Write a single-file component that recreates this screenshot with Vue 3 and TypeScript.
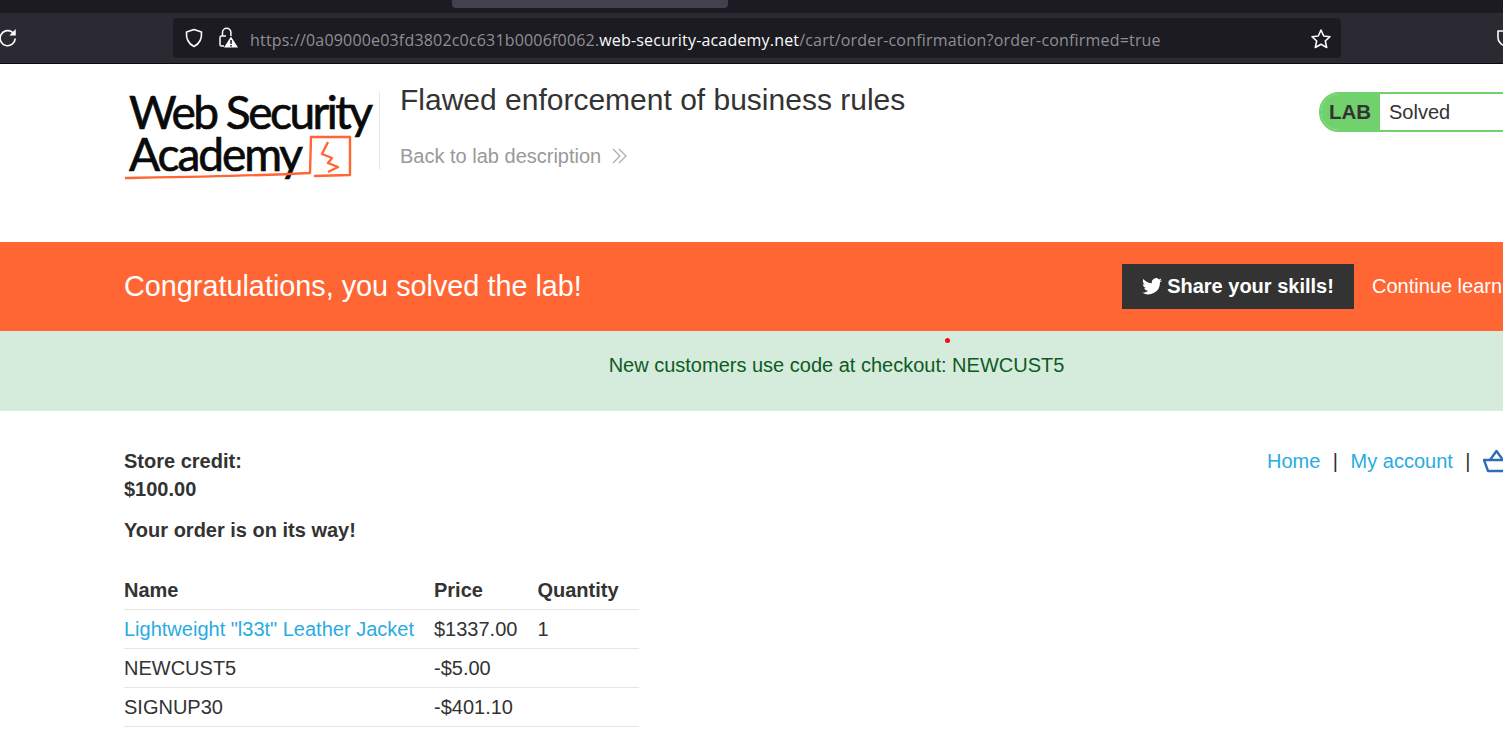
<script setup lang="ts">
interface Row { name: string; price: string; qty: string; link?: boolean }
const rows: Row[] = [
  { name: 'Lightweight "l33t" Leather Jacket', price: '$1337.00', qty: '1', link: true },
  { name: 'NEWCUST5', price: '-$5.00', qty: '' },
  { name: 'SIGNUP30', price: '-$401.10', qty: '' },
]
</script>

<template>
  <div class="viewport">
    <div class="tabstrip"><div class="tab"></div></div>
    <div class="toolbar">
      <svg class="reload" width="20" height="20" viewBox="0 0 18 18" fill="none" stroke="#fbfbfe" stroke-width="1.5">
        <path d="M15.500 9.500A6.800 6.800 0 1 1 12.500 3.500L15 6" />
        <path d="M16 1V6.800H10.200" fill="#fbfbfe" stroke="none" />
      </svg>
      <div class="urlbar">
        <svg class="shield" width="20" height="20" viewBox="0 0 20 20" fill="none" stroke="#fbfbfe" stroke-width="1.6">
          <path d="M10 1.500 17.500 4C18 10.500 15.500 15.800 10 18.500 4.500 15.800 2 10.500 2.500 4Z" stroke-linejoin="round" />
        </svg>
        <svg class="lock" width="20" height="22" viewBox="0 0 20 22" fill="none">
          <path d="M4.500 9V5.500a4.200 4.200 0 0 1 8.400 0V9" stroke="#fbfbfe" stroke-width="1.500" />
          <path d="M8 9H3.500A1.500 1.500 0 0 0 2 10.500v7A1.500 1.500 0 0 0 3.500 19H6" stroke="#fbfbfe" stroke-width="1.500" />
          <path d="M13 9.500 20 20.500H6Z" fill="#fbfbfe" />
          <rect x="12.300" y="13" width="1.500" height="4" fill="#1c1b22" />
          <rect x="12.300" y="18" width="1.500" height="1.500" fill="#1c1b22" />
        </svg>
        <div class="url"><span class="dim">https://0a09000e03fd3802c0c631b0006f0062.</span><span class="host">web-security-academy.net</span><span class="dim">/cart/order-confirmation?order-confirmed=true</span></div>
        <svg class="star" width="22" height="22" viewBox="0 0 22 22" fill="none" stroke="#fbfbfe" stroke-width="1.600" stroke-linejoin="round">
          <path d="M11 2 13.700 8 20 8.700 15.300 13 16.700 19.500 11 16.200 5.300 19.500 6.700 13 2 8.700 8.300 8Z" />
        </svg>
      </div>
      <svg class="pocket" width="18" height="20" viewBox="0 0 18 20" fill="none" stroke="#fbfbfe" stroke-width="1.600">
        <path d="M2 3H16V10C16 14 12 17 9 18 6 17 2 14 2 10Z" stroke-linejoin="round" />
      </svg>
    </div>

    <div class="page">
      <header class="lab-header">
        <div class="logo">
          <div class="logo-line">Web Security</div>
          <div class="logo-line logo-academy">Academy</div>
          <svg class="logo-mark" width="232" height="50" viewBox="0 0 232 50" fill="none" stroke="#ff6633" stroke-width="2.400" stroke-linejoin="round">
            <path d="M1 46C60 45 130 44 186 41L187 5H226L226 43 190 44" />
            <path d="M204 10 198 22 208 26 204 31 214 35 204 40" />
          </svg>
        </div>
        <div class="title-block">
          <h2>Flawed enforcement of business rules</h2>
          <a class="back">Back to lab description
            <svg width="16" height="16" viewBox="0 0 16 16" fill="none" stroke="#aaa" stroke-width="1.200">
              <path d="M1 1 8 8 1 15M7 1 14 8 7 15" />
            </svg>
          </a>
        </div>
        <div class="lab-status">
          <span class="lab-pill">LAB</span>
          <span class="lab-state">Solved</span>
        </div>
      </header>

      <section class="solved">
        <h4>Congratulations, you solved the lab!</h4>
        <div class="solved-actions">
          <a class="share">
            <svg width="20" height="17" viewBox="0 0 24 20" fill="#fff">
              <path d="M24 2.400c-.9.400-1.800.7-2.800.800 1-.6 1.800-1.600 2.200-2.700-1 .6-2 1-3.100 1.200A4.900 4.900 0 0 0 11.900 6.200C7.800 6 4.200 4 1.700.900c-1.300 2.200-.7 5.100 1.500 6.600-.8 0-1.600-.2-2.200-.6 0 2.300 1.600 4.400 3.900 4.900-.7.200-1.500.2-2.200.1.600 2 2.400 3.400 4.600 3.400A9.900 9.900 0 0 1 0 17.300 14 14 0 0 0 21.500 4.900c1-.7 1.900-1.500 2.500-2.500Z" />
            </svg>
            Share your skills!
          </a>
          <a class="continue">Continue learning</a>
        </div>
      </section>

      <div class="notice">
        <span>New customers use code at checkout: NEWCUST5</span>
        <i class="red-dot"></i>
      </div>

      <main class="content">
        <div class="top-row">
          <p class="credit">Store credit:<br />$100.00</p>
          <nav class="nav">
            <a>Home</a><span class="sep">|</span><a>My account</a><span class="sep">|</span>
            <svg class="basket" width="28" height="26" viewBox="0 0 28 26" fill="none" stroke="#2f6db5" stroke-width="2.400" stroke-linejoin="round">
              <path d="M1 12H27L23 23H5Z" />
              <path d="M7 12 13.500 3 20 12" />
            </svg>
          </nav>
        </div>
        <p class="order">Your order is on its way!</p>
        <table>
          <thead>
            <tr><th>Name</th><th>Price</th><th>Quantity</th></tr>
          </thead>
          <tbody>
            <tr v-for="row in rows" :key="row.name">
              <td :class="{ link: row.link }">{{ row.name }}</td>
              <td>{{ row.price }}</td>
              <td>{{ row.qty }}</td>
            </tr>
          </tbody>
        </table>
      </main>
    </div>
  </div>
</template>

<style>
html, body { margin: 0; overflow: hidden; background: #fff; }
</style>

<style scoped>
.viewport {
  width: 1503px;
  height: 736px;
  overflow: hidden;
  font-family: "Liberation Sans", Arial, sans-serif;
  color: #333;
}
.tabstrip { height: 13px; background: #1c1b22; padding-left: 452px; }
.tab { width: 276px; height: 8px; background: #42414d; border-radius: 0 0 4px 4px; }
.toolbar {
  height: 50px;
  border-bottom: 1px solid #0c0c0d;
  background: #2b2a33;
  display: flex;
  align-items: center;
  width: 1540px;
}
.reload { margin-left: -2px; margin-top: -1px; }
.urlbar {
  margin-left: 155px;
  width: 1168px;
  height: 40px;
  box-sizing: border-box;
  background: #1c1b22;
  border-radius: 4px;
  display: flex;
  align-items: center;
  padding-left: 11px;
}
.lock { margin-left: 14px; }
.url {
  margin-left: 12px;
  width: 1060px;
  font-family: "Open Sans", "Noto Sans", sans-serif;
  font-size: 16px;
  line-height: 24px;
  padding-top: 4px;
  white-space: nowrap;
  letter-spacing: 0.18px;
}
.dim { color: #8f8f94; }
.host { color: #fbfbfe; }
.star { margin-top: 1px; }
.pocket { margin-left: 155px; }

.page { width: 1674px; }
.lab-header {
  height: 178px;
  box-sizing: border-box;
  padding: 18px 0 0 124px;
  display: flex;
  align-items: flex-start;
  position: relative;
}
.logo {
  width: 255px;
  height: 88px;
  box-sizing: border-box;
  color: #0a0a0a;
  font-family: "Lato", "Open Sans", sans-serif;
  position: relative;
  padding: 9px 0 0 5px;
}
.logo-line {
  font-size: 46px;
  line-height: 42px;
  letter-spacing: -2.500px;
  white-space: nowrap;
  -webkit-text-stroke: 0.7px #0a0a0a;
}
.logo-academy { letter-spacing: -2.050px; }
.logo-mark { position: absolute; left: 0; top: 50px; }
.title-block {
  height: 78px;
  margin-top: 10px;
  border-left: 1px solid #e6e6e6;
  padding-left: 20px;
}
h2 {
  margin: -10px 0 0;
  font-size: 30px;
  font-weight: 400;
  line-height: 36px;
  color: #333;
  white-space: nowrap;
}
.back {
  display: flex;
  align-items: center;
  gap: 11px;
  margin-top: 26px;
  font-size: 20px;
  line-height: 24px;
  color: #999;
  white-space: nowrap;
}
.lab-status {
  position: absolute;
  left: 1319px;
  top: 28px;
  display: flex;
  height: 40px;
  width: 300px;
  border-radius: 20px 0 0 20px;
  overflow: hidden;
  box-sizing: border-box;
  border: 2px solid #70d16d;
  font-size: 20px;
}
.lab-pill {
  background: #70d16d;
  width: 59px;
  padding-left: 8px;
  box-sizing: border-box;
  font-weight: 700;
  line-height: 36px;
  font-size: 20.500px;
}
.lab-state { padding-left: 9px; line-height: 36px; }

.solved {
  height: 89px;
  background: #ff6633;
  color: #fff;
  display: flex;
  align-items: center;
  padding-left: 124px;
}
h4 {
  margin: 0;
  width: 998px;
  font-size: 28.800px;
  font-weight: 400;
  white-space: nowrap;
}
.solved-actions { display: flex; align-items: center; gap: 18px; margin-top: -1px; }
.share {
  width: 232px;
  height: 45px;
  background: #333;
  font-size: 20px;
  font-weight: 700;
  display: flex;
  align-items: center;
  justify-content: center;
  gap: 5px;
  white-space: nowrap;
}
.continue { font-size: 20px; white-space: nowrap; }

.notice {
  height: 80px;
  background: #d5ecdc;
  color: #0f5a1f;
  font-size: 20px;
  line-height: 68px;
  text-align: center;
  position: relative;
  padding-right: 1px;
}
.red-dot {
  position: absolute;
  left: 944.500px;
  top: 6.500px;
  width: 5px;
  height: 5px;
  border-radius: 50%;
  background: #ee1111;
}

.content { padding: 36px 0 0 124px; font-size: 20px; }
.top-row { display: flex; align-items: flex-start; }
.credit {
  margin: 0;
  width: 1143px;
  font-weight: 700;
  line-height: 28px;
}
.nav { display: flex; align-items: center; line-height: 28px; white-space: nowrap; color: #333; }
.nav a { color: #29abe2; }
.sep { margin: 0 12.500px; }
.order { margin: 13px 0 0; font-weight: 700; line-height: 28px; }
table { border-collapse: collapse; margin-top: 27px; width: 515px; }
th, td {
  text-align: left;
  padding: 0 20px 0 0;
  height: 38px;
  border-bottom: 1px solid #e6e6e6;
  white-space: nowrap;
  line-height: 24px;
}
th { font-weight: 700; }
th:nth-child(1) { width: 290px; }
th:nth-child(2) { width: 83px; }
td.link { color: #29abe2; }
</style>
